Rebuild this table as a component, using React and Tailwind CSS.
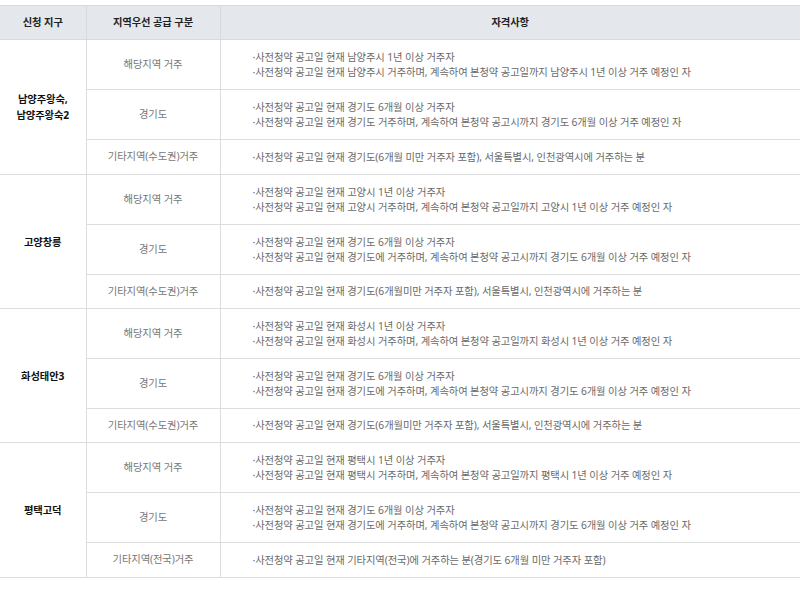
const groups = [
  {
    name: ["남양주왕숙,", "남양주왕숙2"],
    last: "h-[35px]",
    rows: [
      {
        type: "해당지역 거주",
        lines: [
          "·사전청약 공고일 현재 남양주시 1년 이상 거주자",
          "·사전청약 공고일 현재 남양주시 거주하며, 계속하여 본청약 공고일까지 남양주시 1년 이상 거주 예정인 자",
        ],
      },
      {
        type: "경기도",
        lines: [
          "·사전청약 공고일 현재 경기도 6개월 이상 거주자",
          "·사전청약 공고일 현재 경기도 거주하며, 계속하여 본청약 공고시까지 경기도 6개월 이상 거주 예정인 자",
        ],
      },
      {
        type: "기타지역(수도권)거주",
        lines: ["·사전청약 공고일 현재 경기도(6개월 미만 거주자 포함), 서울특별시, 인천광역시에 거주하는 분"],
      },
    ],
  },
  {
    name: ["고양창릉"],
    last: "h-[34px]",
    rows: [
      {
        type: "해당지역 거주",
        lines: [
          "·사전청약 공고일 현재 고양시 1년 이상 거주자",
          "·사전청약 공고일 현재 고양시 거주하며, 계속하여 본청약 공고일까지 고양시 1년 이상 거주 예정인 자",
        ],
      },
      {
        type: "경기도",
        lines: [
          "·사전청약 공고일 현재 경기도 6개월 이상 거주자",
          "·사전청약 공고일 현재 경기도에 거주하며, 계속하여 본청약 공고시까지 경기도 6개월 이상 거주 예정인 자",
        ],
      },
      {
        type: "기타지역(수도권)거주",
        lines: ["·사전청약 공고일 현재 경기도(6개월미만 거주자 포함), 서울특별시, 인천광역시에 거주하는 분"],
      },
    ],
  },
  {
    name: ["화성태안3"],
    last: "h-[34px]",
    rows: [
      {
        type: "해당지역 거주",
        lines: [
          "·사전청약 공고일 현재 화성시 1년 이상 거주자",
          "·사전청약 공고일 현재 화성시 거주하며, 계속하여 본청약 공고일까지 화성시 1년 이상 거주 예정인 자",
        ],
      },
      {
        type: "경기도",
        lines: [
          "·사전청약 공고일 현재 경기도 6개월 이상 거주자",
          "·사전청약 공고일 현재 경기도에 거주하며, 계속하여 본청약 공고시까지 경기도 6개월 이상 거주 예정인 자",
        ],
      },
      {
        type: "기타지역(수도권)거주",
        lines: ["·사전청약 공고일 현재 경기도(6개월미만 거주자 포함), 서울특별시, 인천광역시에 거주하는 분"],
      },
    ],
  },
  {
    name: ["평택고덕"],
    last: "h-[35px]",
    rows: [
      {
        type: "해당지역 거주",
        lines: [
          "·사전청약 공고일 현재 평택시 1년 이상 거주자",
          "·사전청약 공고일 현재 평택시 거주하며, 계속하여 본청약 공고일까지 평택시 1년 이상 거주 예정인 자",
        ],
      },
      {
        type: "경기도",
        lines: [
          "·사전청약 공고일 현재 경기도 6개월 이상 거주자",
          "·사전청약 공고일 현재 경기도에 거주하며, 계속하여 본청약 공고시까지 경기도 6개월 이상 거주 예정인 자",
        ],
      },
      {
        type: "기타지역(전국)거주",
        lines: ["·사전청약 공고일 현재 기타지역(전국)에 거주하는 분(경기도 6개월 미만 거주자 포함)"],
      },
    ],
  },
];

function GroupRows({ group }) {
  return group.rows.map((row, i) => (
    <tr key={row.type} className={row.lines.length > 1 ? "h-[50px]" : group.last}>
      {i === 0 ? (
        <td
          rowSpan={group.rows.length}
          className="border-b border-[#dddddd] text-center align-middle font-bold leading-[16px] text-[#111]"
        >
          {group.name.map((n) => (
            <div key={n}>{n}</div>
          ))}
        </td>
      ) : null}
      <td className="border-x border-b border-[#dddddd] text-center align-middle text-[#777]">{row.type}</td>
      <td className="border-b border-[#dddddd] pl-[32px] align-middle leading-[15px] text-[#6a6a6a]">
        {row.lines.map((line) => (
          <div key={line} className="whitespace-nowrap">
            {line}
          </div>
        ))}
      </td>
    </tr>
  ));
}

export default function App() {
  return (
    <div className="min-h-[589px] bg-white pt-[5px] font-['Noto_Sans','Noto_Sans_CJK_KR',sans-serif] text-[10.3px] tracking-[-0.1px]">
      <table className="w-[800px] table-fixed border-collapse">
        <colgroup>
          <col className="w-[86px]" />
          <col className="w-[134px]" />
          <col />
        </colgroup>
        <thead>
          <tr className="h-[34px] bg-[#e4e7eb] text-[#222]">
            <th className="border-y border-[#d6d9dd] font-bold">신청 지구</th>
            <th className="border border-[#d6d9dd] font-bold">지역우선 공급 구분</th>
            <th className="border-y border-[#d6d9dd] font-bold">자격사항</th>
          </tr>
        </thead>
        <tbody>
          {groups.map((g) => (
            <GroupRows key={g.name.join("")} group={g} />
          ))}
        </tbody>
      </table>
    </div>
  );
}
